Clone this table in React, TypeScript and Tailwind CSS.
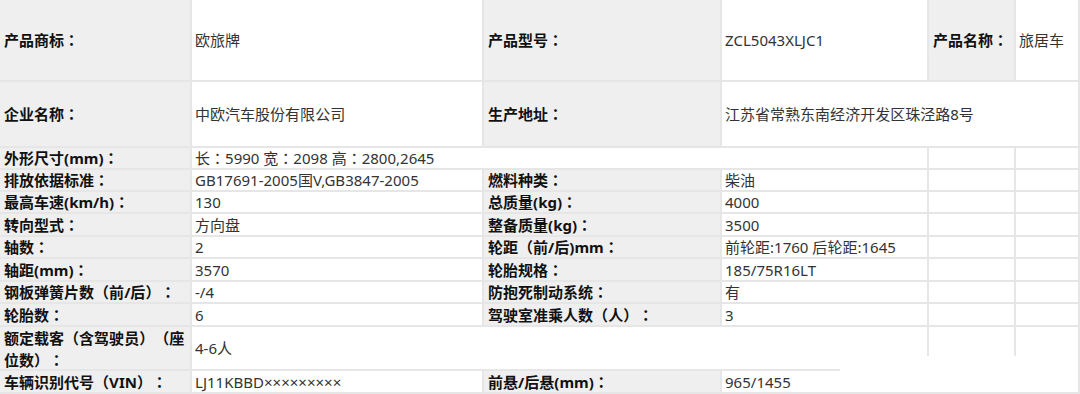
import type { ReactNode } from 'react';

type Cell = { text?: string; label?: boolean; span?: string; tall?: boolean };

const ROWS: Cell[][] = [
  [
    { text: '产品商标：', label: true },
    { text: '欧旅牌' },
    { text: '产品型号：', label: true },
    { text: 'ZCL5043XLJC1' },
    { text: '产品名称：', label: true },
    { text: '旅居车' },
  ],
  [
    { text: '企业名称：', label: true },
    { text: '中欧汽车股份有限公司' },
    { text: '生产地址：', label: true },
    { text: '江苏省常熟东南经济开发区珠泾路8号', span: 'col-span-3' },
  ],
  [
    { text: '外形尺寸(mm)：', label: true },
    { text: '长：5990 宽：2098 高：2800,2645', span: 'col-span-3' },
    {},
    {},
  ],
  [
    { text: '排放依据标准：', label: true },
    { text: 'GB17691-2005国V,GB3847-2005' },
    { text: '燃料种类：', label: true },
    { text: '柴油' },
    {},
    {},
  ],
  [
    { text: '最高车速(km/h)：', label: true },
    { text: '130' },
    { text: '总质量(kg)：', label: true },
    { text: '4000' },
    {},
    {},
  ],
  [
    { text: '转向型式：', label: true },
    { text: '方向盘' },
    { text: '整备质量(kg)：', label: true },
    { text: '3500' },
    {},
    {},
  ],
  [
    { text: '轴数：', label: true },
    { text: '2' },
    { text: '轮距（前/后)mm：', label: true },
    { text: '前轮距:1760 后轮距:1645' },
    {},
    {},
  ],
  [
    { text: '轴距(mm)：', label: true },
    { text: '3570' },
    { text: '轮胎规格：', label: true },
    { text: '185/75R16LT' },
    {},
    {},
  ],
  [
    { text: '钢板弹簧片数（前/后）：', label: true },
    { text: '-/4' },
    { text: '防抱死制动系统：', label: true },
    { text: '有' },
    {},
    {},
  ],
  [
    { text: '轮胎数：', label: true },
    { text: '6' },
    { text: '驾驶室准乘人数（人）：', label: true },
    { text: '3' },
    {},
    {},
  ],
  [
    { text: '额定载客（含驾驶员）（座位数）：', label: true, tall: true },
    { text: '4-6人', span: 'col-span-3' },
    {},
    {},
  ],
  [
    { text: '车辆识别代号（VIN）：', label: true },
    { text: 'LJ11KBBD×××××××××' },
    { text: '前悬/后悬(mm)：', label: true },
    { text: '965/1455' },
    {},
    {},
  ],
];

// fullwidth punctuation drawn centred, as in the source table
function Punct({ text }: { text: string }) {
  return (
    <>
      {Array.from(text).map((ch, i) =>
        '：（）'.includes(ch) ? (
          <span key={i} style={{ fontFamily: '"Noto Sans CJK TC", sans-serif' }}>
            {ch}
          </span>
        ) : (
          ch
        ),
      )}
    </>
  );
}

function Box({ cell }: { cell: Cell }): ReactNode {
  if (cell.label) {
    return (
      <div
        className={`block self-stretch bg-[#efefef] pl-[4px] pr-[2px] font-bold text-[#111] ${
          cell.tall ? 'pt-0 leading-[21px]' : 'flex items-center whitespace-nowrap leading-[20px]'
        } ${cell.span ?? ''}`}
      >
        <span>
          <Punct text={cell.text ?? ''} />
        </span>
      </div>
    );
  }
  return (
    <div
      className={`flex items-center whitespace-nowrap bg-white pl-[3px] leading-[20px] text-[#333] ${cell.span ?? ''}`}
    >
      <span>
        <Punct text={cell.text ?? ''} />
      </span>
    </div>
  );
}

export default function App() {
  return (
    <div
      className="relative h-[394px] w-[1080px] overflow-hidden bg-white text-[15px] [text-spacing-trim:space-all]"
      style={{ fontFamily: '"Noto Sans", "Noto Sans CJK SC", sans-serif' }}
    >
      <div className="grid h-full w-full grid-cols-[190px_290px_236px_205px_85px_62px] grid-rows-[80px_64px_20px_20px_20px_21px_20px_21px_20px_21px_42px_21px] gap-[2px] bg-[#e6e6e6] pr-[2px] pb-[2px]">
        {ROWS.map((row, r) => row.map((cell, c) => <Box key={`${r}-${c}`} cell={cell} />))}
      </div>
      {/* washed-out corner in the source picture */}
      <div className="absolute left-[840px] top-[356px] h-[36px] w-[238px] bg-white" />
    </div>
  );
}
